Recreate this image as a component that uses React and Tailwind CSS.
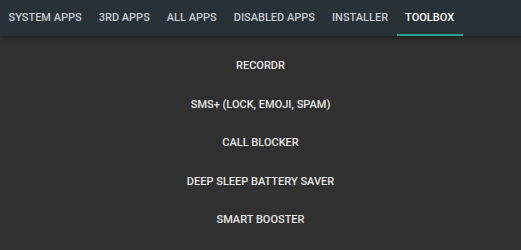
const TABS = ["System Apps", "3rd Apps", "All Apps", "Disabled Apps", "Installer", "Toolbox"];
const TOOLS = ["Recordr", "SMS+ (Lock, Emoji, Spam)", "Call Blocker", "Deep Sleep Battery Saver", "Smart Booster"];

export default function App() {
  return (
    <div className="w-[521px] h-[250px] overflow-hidden bg-[#303030] font-['Roboto','Liberation_Sans',sans-serif]">
      <div className="h-[36px] bg-[#283038] flex shadow-[0_2px_4px_rgba(0,0,0,0.35)] relative">
        {TABS.map((t) => {
          const active = t === "Toolbox";
          return (
            <div
              key={t}
              className={`px-[8.5px] pt-[2px] flex items-center uppercase text-[11px] font-medium border-b-2 ${active ? "text-white border-[#26a08a]" : "text-[#c5cad0] border-transparent"}`}
            >
              {t}
            </div>
          );
        })}
      </div>
      <div className="pt-[11px] flex flex-col">
        {TOOLS.map((t) => (
          <div key={t} className="h-[38.5px] flex items-center justify-center uppercase text-[11px] font-medium text-[#e6e6e6]">
            {t}
          </div>
        ))}
      </div>
    </div>
  );
}
